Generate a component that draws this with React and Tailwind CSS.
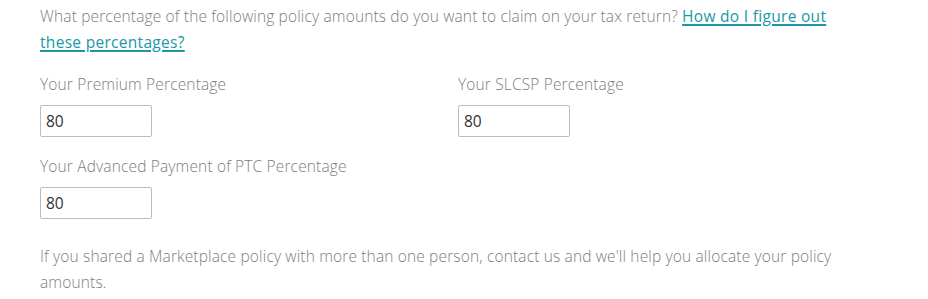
import React from "react";

const FONT = "'Open Sans', Lato, sans-serif";

function Field({ label }) {
  return (
    <div className="flex flex-col">
      <label className="block h-[26px] leading-[26px] text-[15.5px] tracking-[0.15px] font-light text-[#7d7d7d]">{label}</label>
      <input
        type="text"
        defaultValue="80"
        className="mt-2 w-[112px] h-[32px] border border-[#bcbcbc] rounded-[2px] px-[5px] text-[15.5px] text-[#333] font-normal outline-none"
        style={{ fontFamily: FONT }}
      />
    </div>
  );
}

export default function App() {
  return (
    <div
      className="bg-white w-[928px] h-[299px] pl-10 pt-[3px] overflow-hidden"
      style={{ fontFamily: FONT }}
    >
      <div className="w-[815px]">
        <p className="text-[15.5px] tracking-[0.15px] leading-[26px] font-light text-[#7d7d7d]">
          What percentage of the following policy amounts do you want to claim on your tax return?{" "}
          <a href="#" className="font-medium tracking-[0.3px] text-[#1a98a5] underline underline-offset-2 decoration-[1.5px]">
            How do I figure out these percentages?
          </a>
        </p>
        <div className="mt-4 grid grid-cols-[418px_418px] gap-y-4">
          <Field label="Your Premium Percentage" />
          <Field label="Your SLCSP Percentage" />
          <Field label="Your Advanced Payment of PTC Percentage" />
        </div>
        <p className="mt-6 text-[15.5px] tracking-[0.15px] leading-[26px] font-light text-[#7d7d7d]">
          If you shared a Marketplace policy with more than one person, contact us and we'll help you allocate your policy amounts.
        </p>
      </div>
    </div>
  );
}
